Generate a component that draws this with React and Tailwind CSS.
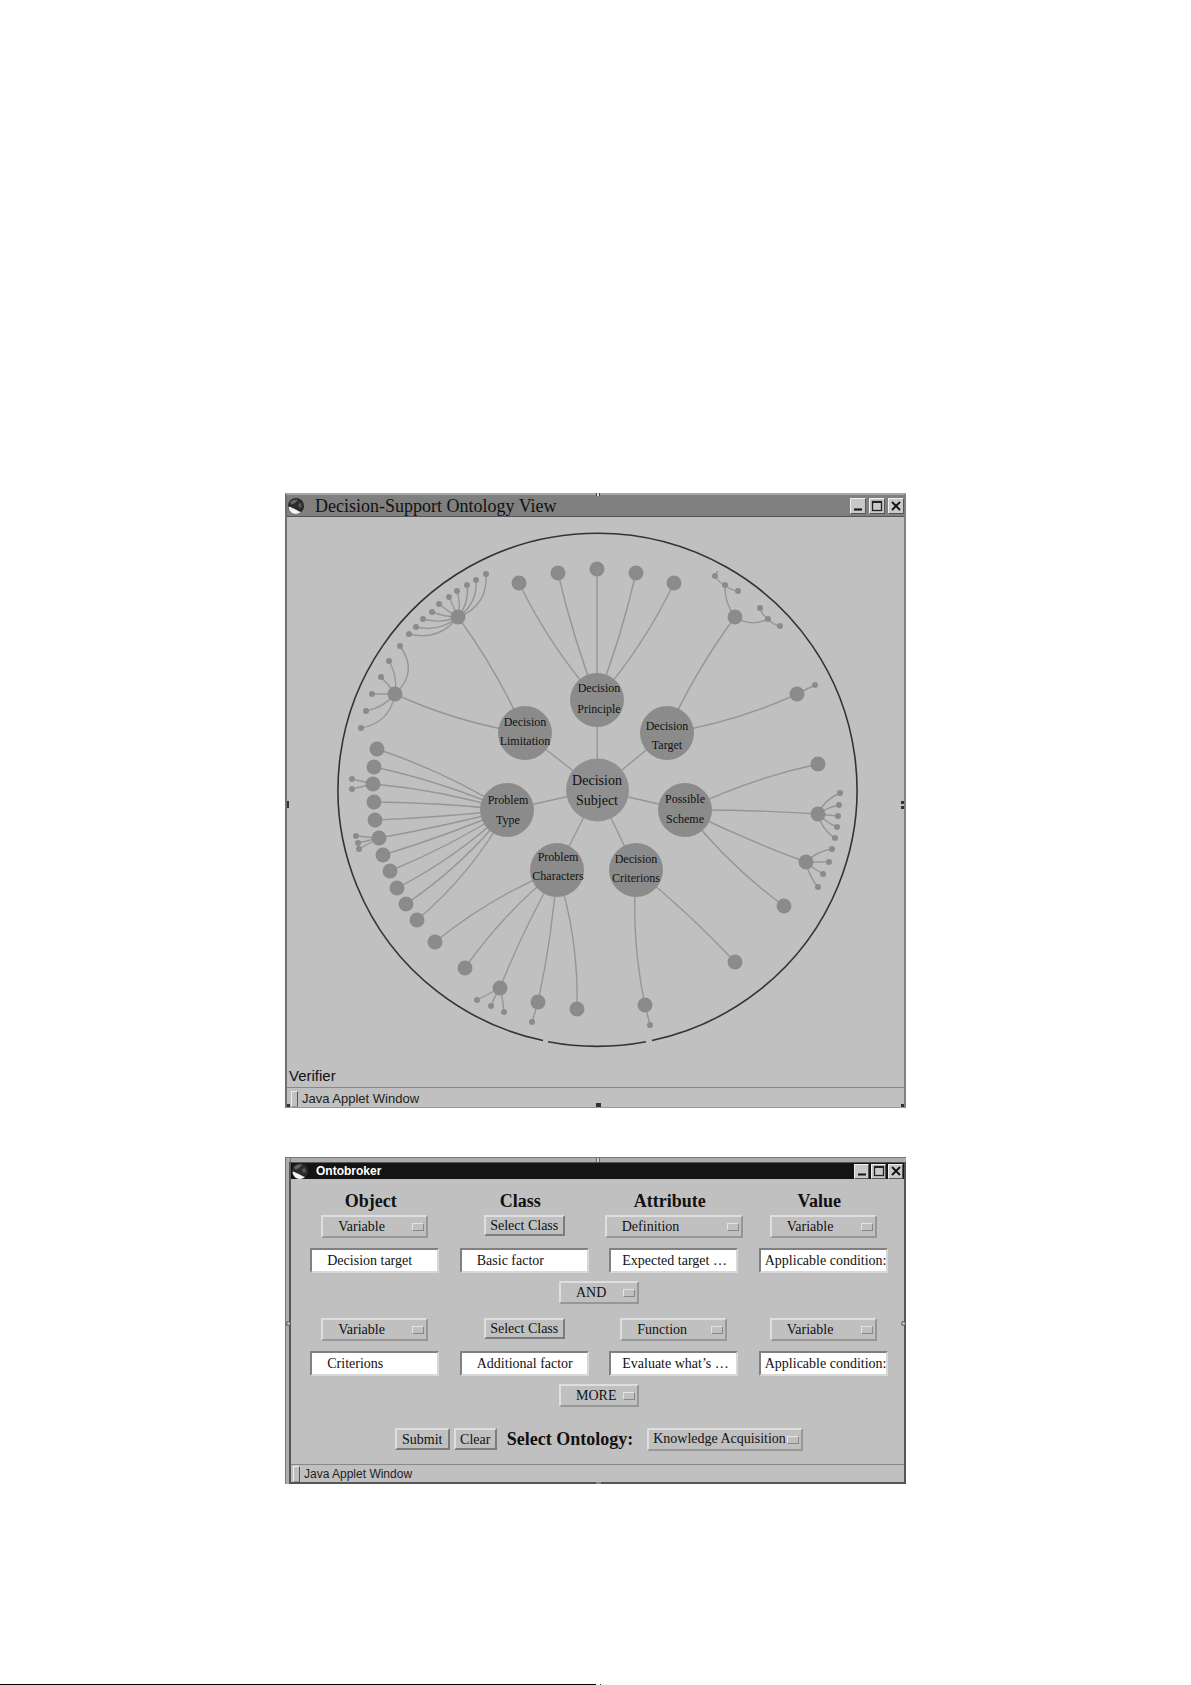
import React from "react";

const HUBS = [
  {
    x: 310, y: 183, r: 27, lines: ["Decision", "Principle"], tx: 312, ty: [175, 196],
    nodes: [
      { x: 232, y: 66, bend: -8 },
      { x: 271, y: 56, bend: -4 },
      { x: 310, y: 52 },
      { x: 349, y: 56, bend: 4 },
      { x: 387, y: 66, bend: 8 },
    ],
  },
  {
    x: 238, y: 216, r: 27, lines: ["Decision", "Limitation"], tx: 238, ty: [209, 228],
    nodes: [
      {
        x: 171, y: 100, bend: 6,
        leaves: [
          { x: 199, y: 57, bend: 16 },
          { x: 189, y: 63, bend: 10 },
          { x: 180, y: 68, bend: 6 },
          { x: 170, y: 74, bend: 3 },
          { x: 162, y: 80 },
          { x: 152, y: 87, bend: -1 },
          { x: 145, y: 95, bend: -2 },
          { x: 136, y: 102, bend: -5 },
          { x: 129, y: 110, bend: -9 },
          { x: 122, y: 117, bend: -14 },
        ],
      },
      {
        x: 108, y: 177, bend: -8,
        leaves: [
          { x: 113, y: 129, bend: 18 },
          { x: 102, y: 144, bend: 5 },
          { x: 94, y: 160, bend: 1 },
          { x: 85, y: 177 },
          { x: 79, y: 194, bend: -5 },
          { x: 74, y: 211, bend: -14 },
        ],
      },
    ],
  },
  {
    x: 380, y: 216, r: 27, lines: ["Decision", "Target"], tx: 380, ty: [213, 232],
    nodes: [
      {
        x: 448, y: 100, bend: -6,
        leaves: [
          {
            x: 438, y: 68, bend: -5,
            leaves: [
              { x: 428, y: 59, bend: -2 },
              { x: 451, y: 74, bend: 2 },
            ],
          },
          {
            x: 481, y: 102, bend: 8,
            leaves: [
              { x: 473, y: 91, bend: -2 },
              { x: 493, y: 109, bend: 2 },
            ],
          },
        ],
      },
      { x: 510, y: 177, bend: 8, leaves: [{ x: 528, y: 168 }] },
    ],
  },
  {
    x: 398, y: 293, r: 27, lines: ["Possible", "Scheme"], tx: 398, ty: [286, 306],
    nodes: [
      { x: 531, y: 247, bend: -7 },
      {
        x: 531, y: 297, bend: -2,
        leaves: [
          { x: 553, y: 276, bend: -5 },
          { x: 552, y: 288, bend: -2 },
          { x: 551, y: 299 },
          { x: 550, y: 310, bend: 2 },
          { x: 548, y: 321, bend: 5 },
        ],
      },
      {
        x: 519, y: 345, bend: 3,
        leaves: [
          { x: 545, y: 332, bend: -4 },
          { x: 542, y: 345 },
          { x: 536, y: 357, bend: 1 },
          { x: 531, y: 370, bend: 3 },
        ],
      },
      { x: 497, y: 389, bend: 8 },
    ],
  },
  {
    x: 349, y: 353, r: 27, lines: ["Decision", "Criterions"], tx: 349, ty: [346, 365],
    nodes: [
      { x: 448, y: 445, bend: -4 },
      { x: 358, y: 488, bend: 8, leaves: [{ x: 363, y: 508 }] },
    ],
  },
  {
    x: 270, y: 353, r: 27, lines: ["Problem", "Characters"], tx: 271, ty: [344, 363],
    nodes: [
      { x: 148, y: 425, bend: 9 },
      { x: 178, y: 451, bend: 8 },
      {
        x: 213, y: 471, bend: 4,
        leaves: [
          { x: 190, y: 483 },
          { x: 204, y: 489, bend: 1 },
          { x: 217, y: 495, bend: -1 },
        ],
      },
      { x: 251, y: 485, bend: -4, leaves: [{ x: 245, y: 505 }] },
      { x: 290, y: 492, bend: -10 },
    ],
  },
  {
    x: 220, y: 293, r: 27, lines: ["Problem", "Type"], tx: 221, ty: [287, 307],
    nodes: [
      { x: 90, y: 232, bend: 7 },
      { x: 87, y: 250, bend: 6 },
      { x: 86, y: 267, bend: 6, leaves: [{ x: 65, y: 262 }, { x: 65, y: 272 }] },
      { x: 87, y: 285, bend: 3 },
      { x: 88, y: 303, bend: -2 },
      {
        x: 92, y: 321, bend: -2,
        leaves: [{ x: 69, y: 319 }, { x: 71, y: 326 }, { x: 72, y: 332 }],
      },
      { x: 96, y: 338, bend: -3 },
      { x: 103, y: 354, bend: -5 },
      { x: 110, y: 371, bend: -8 },
      { x: 119, y: 387, bend: -9 },
      { x: 130, y: 403, bend: -11 },
    ],
  },
];

const QUERY_ROWS = [
  {
    object: "Variable",
    attribute: "Definition",
    attributeWidth: "w-[138px]",
    value: "Variable",
    fields: ["Decision target", "Basic factor", "Expected target …", "Applicable condition:"],
    join: "AND",
  },
  {
    object: "Variable",
    attribute: "Function",
    attributeWidth: "w-[107px]",
    value: "Variable",
    fields: ["Criterions", "Additional factor", "Evaluate what’s …", "Applicable condition:"],
    join: "MORE",
  },
];

const COLUMNS = ["Object", "Class", "Attribute", "Value"];
const FIELD_PADDING = ["pl-[15px]", "pl-[15px]", "pl-[11px]", "pl-1"];

// quadratic curve between two points, pushed sideways by `bend`
function curve(from, to) {
  const dx = to.x - from.x;
  const dy = to.y - from.y;
  const len = Math.hypot(dx, dy);
  const bend = (to.bend || 0) * 1.2;
  const cx = (from.x + to.x) / 2 - (dy / len) * bend;
  const cy = (from.y + to.y) / 2 + (dx / len) * bend;
  return `M${from.x} ${from.y}Q${cx} ${cy} ${to.x} ${to.y}`;
}

function Branch({ from, node, level }) {
  return (
    <g>
      <path d={curve(from, node)} fill="none" stroke="#969696" strokeWidth="1.4" />
      {node.leaves?.map((leaf) => (
        <Branch key={`${leaf.x}-${leaf.y}`} from={node} node={leaf} level={level + 1} />
      ))}
      <circle cx={node.x} cy={node.y} r={level === 0 ? 7.5 : 3} fill="#8b8b8b" />
    </g>
  );
}

function OntologyGraph() {
  return (
    <svg viewBox="0 0 617 547" className="block w-full" role="img" aria-label="Decision Subject">
      <g fill="none" stroke="#333" strokeWidth="1.6">
        <path d="M365 523.5A259.5 256.5 0 1 0 256 523.5" />
        <path d="M261 524.7A259.5 256 0 0 0 359 524.7" />
      </g>
      <path d="M431 54L428 59" stroke="#969696" strokeWidth="1.4" />
      {HUBS.map((hub) => (
        <g key={hub.lines.join(" ")}>
          <path d={`M310.5 273L${hub.x} ${hub.y}`} stroke="#969696" strokeWidth="1.4" />
          {hub.nodes.map((node) => (
            <Branch key={`${node.x}-${node.y}`} from={hub} node={node} level={0} />
          ))}
        </g>
      ))}
      <g textAnchor="middle" fill="#111" className="font-['Liberation_Serif',serif] text-[12px]">
        {HUBS.map((hub) => (
          <g key={hub.lines.join(" ")}>
            <circle cx={hub.x} cy={hub.y} r={hub.r} fill="#8b8b8b" />
            <text x={hub.tx} y={hub.ty[0]}>{hub.lines[0]}</text>
            <text x={hub.tx} y={hub.ty[1]}>{hub.lines[1]}</text>
          </g>
        ))}
      </g>
      <circle cx="310.5" cy="273" r="31.5" fill="#909090" />
      <g textAnchor="middle" fill="#111" className="font-['Liberation_Serif',serif] text-[14px]">
        <text x="310" y="268">Decision</text>
        <text x="310" y="288">Subject</text>
      </g>
    </svg>
  );
}

function Globe() {
  return (
    <svg viewBox="0 0 18 18" className="size-[18px] shrink-0" aria-hidden="true">
      <circle cx="9" cy="9" r="8" fill="#2b2b2b" />
      <path d="M1.5 10C3.5 9 4.5 11.5 7 11.5C8 13 10.5 12.5 11 14L14 15C10 18.5 2.5 17.5 1.5 10Z" fill="#f4f4f4" />
      <path d="M3 6C5 2.5 9 2 11 3L8 6L5 7.5Z" fill="#666" />
      <path d="M11 7L14 6L15 10L12 11Z" fill="#555" />
    </svg>
  );
}

function WindowButtons({ size, gap }) {
  const button = `${size} flex items-center justify-center bg-[#c8c8c8] border border-t-[#eee] border-l-[#eee] border-r-[#555] border-b-[#555]`;
  return (
    <div className={`ml-auto flex ${gap}`}>
      <button className={button} aria-label="Minimize">
        <svg viewBox="0 0 12 12" className="size-3"><path d="M2 9.5H10" stroke="#111" strokeWidth="2" /></svg>
      </button>
      <button className={button} aria-label="Maximize">
        <svg viewBox="0 0 12 12" className="size-3" fill="none" stroke="#222">
          <rect x="1.5" y="1.5" width="9" height="9" strokeWidth="1.3" />
          <path d="M1 2H11" strokeWidth="2" />
        </svg>
      </button>
      <button className={button} aria-label="Close">
        <svg viewBox="0 0 12 12" className="size-3"><path d="M2 2L10 10M10 2L2 10" stroke="#111" strokeWidth="1.8" /></svg>
      </button>
    </div>
  );
}

function StatusBar({ className }) {
  return (
    <footer className={`flex items-center border-t border-[#888] text-[#222] font-['Liberation_Sans',sans-serif] ${className}`}>
      <span className="mr-1 h-4 w-[7px] border border-l-[#eee] border-t-[#eee] border-r-[#555] border-b-[#999]" />
      Java Applet Window
    </footer>
  );
}

function OptionMenu({ label, value, className = "w-[107px]", padding = "pl-[15px]" }) {
  return (
    <div className={`relative h-[23px] ${className}`}>
      <select
        aria-label={label}
        defaultValue={value}
        className={`block size-full appearance-none border-2 border-t-[#dedede] border-l-[#dedede] border-r-[#979797] border-b-[#979797] bg-[#c0c0c0] text-[14px] leading-[18px] ${padding}`}
      >
        <option>{value}</option>
      </select>
      <span className="pointer-events-none absolute right-1 top-2 h-2 w-3 border border-t-[#e4e4e4] border-l-[#e4e4e4] border-r-[#888] border-b-[#888]" />
    </div>
  );
}

function PushButton({ children, className }) {
  return (
    <button
      className={`border-2 border-t-[#dedede] border-l-[#dedede] border-r-[#7c7c7c] border-b-[#7c7c7c] bg-[#c0c0c0] text-[14px] leading-[17px] ${className}`}
    >
      {children}
    </button>
  );
}

function QueryRow({ row }) {
  return (
    <>
      <div className="grid grid-cols-4 justify-items-center">
        <OptionMenu label="Object" value={row.object} />
        <PushButton className="h-[21px] w-[81px]">Select Class</PushButton>
        <OptionMenu label="Attribute" value={row.attribute} className={row.attributeWidth} />
        <OptionMenu label="Value" value={row.value} />
      </div>
      <div className="mt-[10px] grid grid-cols-4 justify-items-center">
        {row.fields.map((field, i) => (
          <input
            key={COLUMNS[i]}
            aria-label={COLUMNS[i]}
            defaultValue={field}
            className={`h-[25px] w-[129px] border-2 border-t-[#808080] border-l-[#808080] border-r-[#d8d8d8] border-b-[#d8d8d8] bg-white text-[14px] leading-[18px] ${FIELD_PADDING[i]}`}
          />
        ))}
      </div>
      <OptionMenu label="Operator" value={row.join} className="mx-auto mt-2 w-20" />
    </>
  );
}

export default function App() {
  return (
    <div className="flex min-h-screen flex-col bg-white pt-[493px] text-[#111]">
      <main className="mx-auto flex w-full max-w-[621px] flex-col gap-[49px]">
        <section className="relative border-2 border-b border-t-[#a8a8a8] border-l-[#707070] border-r-[#808080] border-b-[#999] bg-[#c0c0c0]">
          <header className="flex h-[22px] items-center border-b border-[#555] bg-[#808080]">
            <Globe />
            <h1 className="pl-[10px] text-[18px] leading-5 font-['Liberation_Serif',serif]">
              Decision-Support Ontology View
            </h1>
            <WindowButtons size="size-4" gap="gap-[3px]" />
          </header>
          <OntologyGraph />
          <p className="pl-[2px] text-[15px] leading-[23px] font-['Liberation_Sans',sans-serif]">Verifier</p>
          <StatusBar className="h-5 pl-1 pt-[2px] text-[13px]" />
          {/* resize handles */}
          <span className="absolute -top-[2px] left-1/2 h-[3px] w-1 border-x border-[#444] bg-[#ddd]" />
          <span className="absolute bottom-0 left-1/2 h-1 w-[5px] bg-[#333]" />
          <span className="absolute bottom-0 left-0 h-[3px] w-[3px] bg-[#333]" />
          <span className="absolute bottom-0 right-0 h-[3px] w-[3px] bg-[#333]" />
          <span className="absolute left-0 top-1/2 h-[7px] w-[2px] bg-[#333]" />
          <span className="absolute right-0 top-1/2 h-2 w-[3px] border-y-3 border-[#333]" />
        </section>

        <section className="relative border border-r-0 border-b-0 border-[#777] bg-[#adadad] pl-[3px] pt-1 font-['Liberation_Serif',serif]">
          <div className="border-2 border-t border-[#555] bg-[#c0c0c0]">
            <header className="flex h-4 items-center bg-[#141414] pr-[1px]">
              <Globe />
              <h2 className="pl-[7px] text-[12px] leading-4 font-bold text-white font-['Liberation_Sans',sans-serif]">
                Ontobroker
              </h2>
              <WindowButtons size="size-[15px]" gap="gap-[2px]" />
            </header>
            <div className="pt-[10px] pr-[6px] pb-[13px] pl-[9px]">
              <div className="mr-1 -ml-1 mb-[2px] grid grid-cols-4 text-center text-[18px] leading-6 font-bold">
                {COLUMNS.map((name) => (
                  <h3 key={name}>{name}</h3>
                ))}
              </div>
              <div className="flex flex-col gap-[14px]">
                {QUERY_ROWS.map((row) => (
                  <div key={row.join}>
                    <QueryRow row={row} />
                  </div>
                ))}
              </div>
              <div className="mt-5 flex items-center justify-center">
                <PushButton className="h-[22px] w-[55px]">Submit</PushButton>
                <PushButton className="ml-1 h-[22px] w-[43px]">Clear</PushButton>
                <span className="ml-[10px] mr-[14px] text-[18px] leading-6 font-bold">Select Ontology:</span>
                <OptionMenu label="Select Ontology" value="Knowledge Acquisition" className="w-[156px]" padding="pl-1" />
              </div>
            </div>
            <StatusBar className="h-[18px] pl-[2px] text-[12px]" />
          </div>
          {/* resize handles */}
          <span className="absolute top-0 left-[3px] h-1 w-[2px] border-r border-[#777]" />
          <span className="absolute top-0 left-1/2 h-1 w-1 border-x border-[#666] bg-[#ccc]" />
          <span className="absolute top-1/2 left-0 size-[5px] rounded-full border border-[#555] bg-[#bbb]" />
          <span className="absolute top-1/2 right-0 size-[5px] rounded-full border border-[#555] bg-[#bbb]" />
          <span className="absolute bottom-0 left-1/2 h-[2px] w-[5px] bg-[#888]" />
        </section>
      </main>
      <div className="mt-auto flex h-px gap-1">
        <div className="w-1/2 bg-black" />
        <div className="w-px bg-[#0b4a45]" />
      </div>
    </div>
  );
}
